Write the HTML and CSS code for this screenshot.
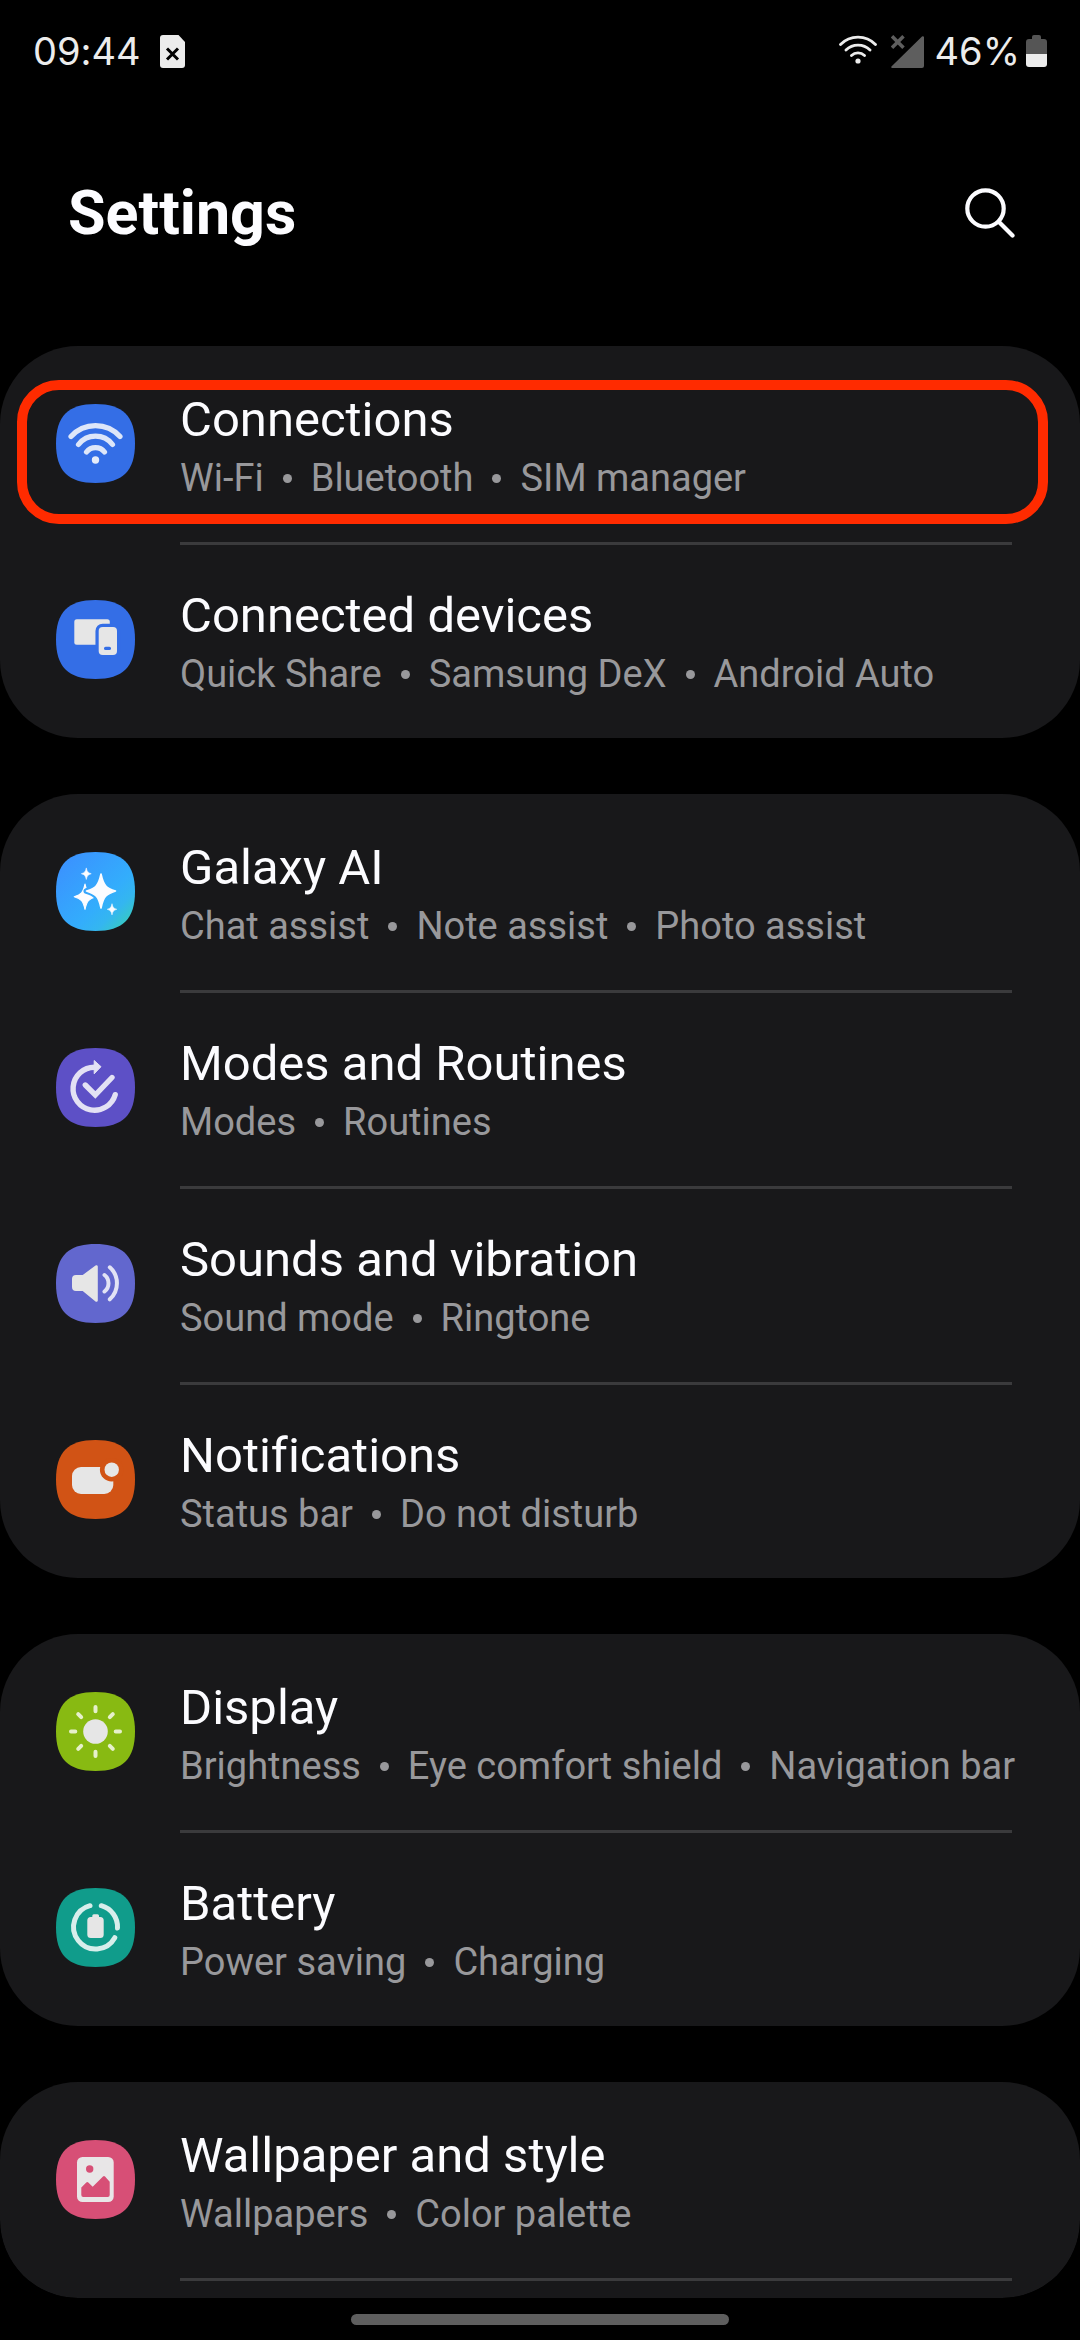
FILE: index.html
```html
<!DOCTYPE html>
<html lang="en">
<head>
<meta charset="utf-8">
<meta name="viewport" content="width=device-width, initial-scale=1">
<title>Settings</title>
<link rel="stylesheet" href="styles.css">
</head>
<body>
<svg class="defs" width="0" height="0" aria-hidden="true">
  <defs>
    <path id="tile" d="M39.500 0C66.800 0 79 12.200 79 39.500C79 66.800 66.800 79 39.500 79C12.200 79 0 66.800 0 39.500C0 12.200 12.200 0 39.500 0Z"/>
    <path id="star" d="M0-17C2.500-5.500 5-3 14.500 0C5 3 2.500 5.500 0 17C-2.500 5.500-5 3-14.500 0C-5-3-2.500-5.500 0-17Z"/>
    <linearGradient id="ai" x1="0" y1="0" x2="1" y2="1">
      <stop offset="0" stop-color="#3c8dff"/>
      <stop offset=".6" stop-color="#33adfc"/>
      <stop offset=".75" stop-color="#34b6f0"/>
      <stop offset="1" stop-color="#38d6a8"/>
    </linearGradient>
    <mask id="behind-star" maskUnits="userSpaceOnUse" x="0" y="0" width="79" height="79">
      <rect width="79" height="79" fill="#fff"/>
      <use href="#star" transform="translate(45 39)" fill="#000" stroke="#000" stroke-width="6" stroke-linejoin="round"/>
    </mask>
  </defs>
</svg>

<div class="status-bar">
  <div class="status-group">
    <span class="clock">09:44</span>
    <svg class="sim" viewBox="0 0 25 33" aria-label="No SIM"><path d="M3 0H18.500L25 7V30a3 3 0 0 1-3 3H3a3 3 0 0 1-3-3V3a3 3 0 0 1 3-3Z" fill="#ececec"/><path d="M7 13.500l11 11M18 13.500L7 24.500" stroke="#000" stroke-width="3"/></svg>
  </div>
  <div class="status-group">
    <svg class="wifi" viewBox="0 0 38 29" aria-label="Wi-Fi"><g fill="none" stroke="#ececec" stroke-width="2.800" stroke-linecap="round"><path d="M1.500 9.500a24.500 24.500 0 0 1 35 0M7 15a17 17 0 0 1 24 0M12.500 20.500a9.500 9.500 0 0 1 13 0"/></g><circle cx="19" cy="26" r="2.600" fill="#ececec"/></svg>
    <svg class="signal" viewBox="0 0 33 33" aria-label="No signal"><path d="M31 1.500a1.200 1.200 0 0 1 2 .800V31a2 2 0 0 1-2 2H1.500a1 1 0 0 1-.800-1.800Z" fill="#5e5e5e"/><path d="M1 1.200l11.500 11.500M12.500 1.200L1 12.700" stroke="#5e5e5e" stroke-width="3.500"/></svg>
    <span class="level">46%</span>
    <svg class="battery" viewBox="0 0 21 32" aria-label="Battery"><path d="M6 4V2a2 2 0 0 1 2-2h5a2 2 0 0 1 2 2v2h3a3 3 0 0 1 3 3v12H0V7a3 3 0 0 1 3-3Z" fill="#555"/><path d="M0 19h21v10a3 3 0 0 1-3 3H3a3 3 0 0 1-3-3Z" fill="#ececec"/></svg>
  </div>
</div>

<header class="header">
  <h1 class="title">Settings</h1>
  <button class="search" type="button" aria-label="Search"><svg viewBox="0 0 50 50"><g fill="none" stroke="#fcfcff" stroke-width="4.200" stroke-linecap="round"><circle cx="20.500" cy="20.500" r="18.200"/><path d="M34 34L47.500 47.500"/></g></svg></button>
</header>

<main class="list">
  <ul class="card">
    <li class="item">
      <a class="row highlight" href="#connections">
        <svg class="icon" viewBox="0 0 79 79"><use href="#tile" fill="#346ee6"/><g fill="none" stroke="#dde6f9" stroke-width="5.200" stroke-linecap="round"><path d="M15 32.500a33 33 0 0 1 49 0M22.500 40.500a21.500 21.500 0 0 1 34 0M30.500 48a11.300 11.300 0 0 1 18 0"/></g><circle cx="39.500" cy="56" r="3.700" fill="#e6ecf9"/></svg>
        <span class="text"><span class="name">Connections</span><span class="hint"><span>Wi-Fi</span><i class="dot"></i><span>Bluetooth</span><i class="dot"></i><span>SIM manager</span></span></span>
      </a>
    </li>
    <li class="item">
      <a class="row" href="#devices">
        <svg class="icon" viewBox="0 0 79 79"><use href="#tile" fill="#346ee6"/><rect x="18.300" y="19.300" width="35.500" height="25.500" rx="2.500" fill="#e6e6e6"/><rect x="42.700" y="27" width="18.300" height="28" rx="4" fill="#346ee6" stroke="#346ee6" stroke-width="6.500"/><rect x="42.700" y="27" width="18.300" height="28" rx="4" fill="#e6e6e6"/><rect x="48" y="46.700" width="7" height="3.300" rx="1.600" fill="#346ee6"/></svg>
        <span class="text"><span class="name">Connected devices</span><span class="hint"><span>Quick Share</span><i class="dot"></i><span>Samsung DeX</span><i class="dot"></i><span>Android Auto</span></span></span>
      </a>
    </li>
  </ul>

  <ul class="card">
    <li class="item">
      <a class="row" href="#ai">
        <svg class="icon" viewBox="0 0 79 79"><use href="#tile" fill="url(#ai)"/><g fill="#fcfcff" stroke="#fcfcff" stroke-width="1.600" stroke-linejoin="round"><use href="#star" transform="translate(45 39)"/><g mask="url(#behind-star)"><use href="#star" transform="translate(29 44.700) scale(.74)"/></g><use href="#star" transform="translate(30.300 21.700) scale(.34)"/><use href="#star" transform="translate(56 57.300) scale(.33)"/></g></svg>
        <span class="text"><span class="name">Galaxy AI</span><span class="hint"><span>Chat assist</span><i class="dot"></i><span>Note assist</span><i class="dot"></i><span>Photo assist</span></span></span>
      </a>
    </li>
    <li class="item">
      <a class="row" href="#modes">
        <svg class="icon" viewBox="0 0 79 79"><use href="#tile" fill="#5d50c6"/><g fill="none" stroke="#e3e1f4" stroke-width="5.400" stroke-linecap="round"><path d="M38.500 19.200a21.500 21.500 0 1 0 20.700 27.500"/><path d="M29.300 37l10 10L56 29.500"/></g><path d="M38.200 12.500L45 18.700L38.200 25.800Z" fill="#e3e1f4" stroke="#e3e1f4" stroke-linejoin="round"/></svg>
        <span class="text"><span class="name">Modes and Routines</span><span class="hint"><span>Modes</span><i class="dot"></i><span>Routines</span></span></span>
      </a>
    </li>
    <li class="item">
      <a class="row" href="#sounds">
        <svg class="icon" viewBox="0 0 79 79"><use href="#tile" fill="#6267ce"/><path d="M20 31h6.700L39.500 21.500a1.400 1.400 0 0 1 2.300 1V56.500a1.400 1.400 0 0 1-2.300 1L26.700 47H20a4 4 0 0 1-4-4V35a4 4 0 0 1 4-4Z" fill="#e6e6e6"/><g fill="none" stroke="#e2e3f5" stroke-width="4" stroke-linecap="round"><path d="M48.500 31a10.500 10.500 0 0 1 0 16.500M53.800 23.300a21.500 21.500 0 0 1 0 32"/></g></svg>
        <span class="text"><span class="name">Sounds and vibration</span><span class="hint"><span>Sound mode</span><i class="dot"></i><span>Ringtone</span></span></span>
      </a>
    </li>
    <li class="item">
      <a class="row" href="#notifications">
        <svg class="icon" viewBox="0 0 79 79"><use href="#tile" fill="#d15315"/><rect x="16" y="27" width="41.300" height="27" rx="9" fill="#e6e6e6"/><circle cx="55.700" cy="29.700" r="11.800" fill="#d15315"/><circle cx="55.700" cy="29.700" r="7.200" fill="#e6e6e6"/></svg>
        <span class="text"><span class="name">Notifications</span><span class="hint"><span>Status bar</span><i class="dot"></i><span>Do not disturb</span></span></span>
      </a>
    </li>
  </ul>

  <ul class="card">
    <li class="item">
      <a class="row" href="#display">
        <svg class="icon" viewBox="0 0 79 79"><use href="#tile" fill="#88ba12"/><circle cx="39.500" cy="39.500" r="12.300" fill="#e6e6e6"/><g stroke="#e6f0cb" stroke-width="4" stroke-linecap="round"><path d="M39.500 15v4.300M39.500 59.700V64M15 39.500h4.300M59.700 39.500H64M22.200 22.200l3 3M53.800 53.800l3 3M22.200 56.800l3-3M53.800 25.200l3-3"/></g></svg>
        <span class="text"><span class="name">Display</span><span class="hint"><span>Brightness</span><i class="dot"></i><span>Eye comfort shield</span><i class="dot"></i><span>Navigation bar</span></span></span>
      </a>
    </li>
    <li class="item">
      <a class="row" href="#battery">
        <svg class="icon" viewBox="0 0 79 79"><use href="#tile" fill="#109c8b"/><g fill="none" stroke="#d7eeeb" stroke-width="5" stroke-linecap="round"><path d="M34 17.700A22 22 0 1 0 58.800 49.700M45.300 17.700A22 22 0 0 1 61.500 40"/></g><path d="M36.300 29v-1.200a1.500 1.500 0 0 1 1.500-1.500h3.700a1.500 1.500 0 0 1 1.500 1.500V29h1.200a3.500 3.500 0 0 1 3.500 3.500v14a3.500 3.500 0 0 1-3.500 3.500h-9.400a3.500 3.500 0 0 1-3.500-3.500v-14a3.500 3.500 0 0 1 3.500-3.500Z" fill="#e6e6e6"/></svg>
        <span class="text"><span class="name">Battery</span><span class="hint"><span>Power saving</span><i class="dot"></i><span>Charging</span></span></span>
      </a>
    </li>
  </ul>

  <ul class="card card-last">
    <li class="item">
      <a class="row" href="#wallpaper">
        <svg class="icon" viewBox="0 0 79 79"><use href="#tile" fill="#d74f76"/><rect x="21" y="17" width="36.700" height="45" rx="5.500" fill="#e8e6e7"/><circle cx="33.700" cy="29" r="3.700" fill="#d74f76"/><path d="M25.300 47.500l5-5q1-1 2 0l4.400 4.300L47 36.600q1-1 2 0l4.700 5.200V55a2 2 0 0 1-2 2H27.300a2 2 0 0 1-2-2Z" fill="#d74f76"/></svg>
        <span class="text"><span class="name">Wallpaper and style</span><span class="hint"><span>Wallpapers</span><i class="dot"></i><span>Color palette</span></span></span>
      </a>
    </li>
    <li class="item" aria-hidden="true"></li>
  </ul>
</main>

<div class="nav-area"><div class="nav-handle"></div></div>
</body>
</html>
```

FILE: styles.css
```css
* {
  box-sizing: border-box;
}

body {
  margin: 0;
  height: 100vh;
  display: flex;
  flex-direction: column;
  overflow: hidden;
  background: #000;
  color: #fcfcff;
  font-family: Roboto, "Noto Sans", sans-serif;
  font-variant-ligatures: none;
}

svg {
  display: block;
  flex: none;
}

.defs {
  position: absolute;
}

/* Status bar */
.status-bar {
  flex: none;
  height: 102px;
  padding: 0 33px;
  display: flex;
  justify-content: space-between;
  align-items: center;
  color: #ececec;
  font-family: Inter, Roboto, sans-serif;
  font-size: 38px;
  line-height: 48px;
}

.status-group {
  display: flex;
  align-items: center;
}

.sim {
  width: 25px;
  height: 33px;
  margin-left: 19px;
}

.wifi {
  width: 38px;
  height: 29px;
  margin: 0 14px 4px 0;
}

.signal {
  width: 33px;
  height: 33px;
  margin-right: 11px;
}

.battery {
  width: 21px;
  height: 32px;
  margin-left: 6px;
}

/* Header */
.header {
  flex: none;
  height: 244px;
  padding: 0 65px 22px 68px;
  display: flex;
  justify-content: space-between;
  align-items: center;
}

.title {
  margin: 0;
  font-size: 61px;
  line-height: 80px;
  font-weight: 700;
}

.search {
  width: 50px;
  height: 50px;
  padding: 0;
  border: 0;
  background: none;
}

/* Cards */
.list {
  flex: 1;
  min-height: 0;
  display: flex;
  flex-direction: column;
  gap: 56px;
  overflow: hidden;
  border-radius: 0 0 78px 78px;
}

.card {
  flex: none;
  margin: 0;
  padding: 0;
  list-style: none;
  background: #18181a;
  border-radius: 78px;
}

.card-last {
  flex: 1;
}

.item + .item::before {
  content: "";
  display: block;
  height: 3px;
  margin: 0 68px -3px 180px;
  background: #3a3a3c;
}

.row {
  position: relative;
  display: flex;
  gap: 45px;
  padding: 46px 68px 34px 56px;
  color: inherit;
  text-decoration: none;
}

.icon {
  width: 79px;
  height: 79px;
  margin-top: 12px;
}

.name {
  display: block;
  font-size: 49px;
  line-height: 56px;
}

.hint {
  display: flex;
  align-items: center;
  color: #98989b;
  font-size: 38px;
  line-height: 60px;
  white-space: nowrap;
}

.dot {
  width: 9px;
  height: 9px;
  margin: 0 19px;
  border-radius: 50%;
  background: currentColor;
}

.highlight::after {
  content: "";
  position: absolute;
  inset: 34px 32px 18px 17px;
  border: 10px solid #ff2b00;
  border-radius: 42px;
}

/* Gesture handle */
.nav-area {
  flex: none;
  height: 42px;
  padding-top: 16px;
}

.nav-handle {
  width: 35%;
  height: 11px;
  margin: 0 auto;
  border-radius: 6px;
  background: #5e5e5e;
}
```
